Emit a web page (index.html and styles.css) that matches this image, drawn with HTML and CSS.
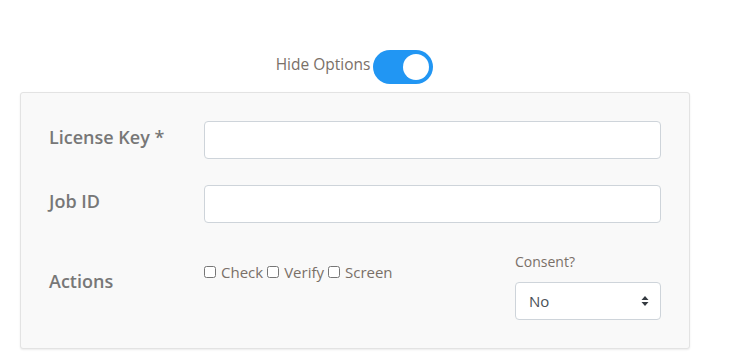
FILE: index.html
```html
<html>
  <head>
    <meta charset="utf-8" />
    <title>Options</title>
    <link rel="stylesheet" href="styles.css">
  </head>
  <body>
    <div class="wrap">
      <div class="toggle-row">
        <span class="toggle-label">Hide Options</span>
        <label class="switch">
          <input type="checkbox" checked>
          <span class="slider"></span>
        </label>
      </div>

      <div class="card">
        <div class="row">
          <div class="label">License Key *</div>
          <input class="field" type="text">
        </div>
        <div class="row">
          <div class="label">Job ID</div>
          <input class="field" type="text">
        </div>
        <div class="row actions">
          <div class="label">Actions</div>
          <div class="checks">
            <label><input type="checkbox"> Check</label>
            <label><input type="checkbox"> Verify</label>
            <label><input type="checkbox"> Screen</label>
          </div>
          <div class="consent">
            <div class="consent-label">Consent?</div>
            <div class="select-box">
              <select>
                <option>No</option>
                <option>Yes</option>
              </select>
              <svg class="arrows" width="8" height="12" viewBox="0 0 8 12">
                <path d="M4 1 L7.5 5 L0.5 5 Z M4 11 L0.5 7 L7.5 7 Z" fill="#343a40"/>
              </svg>
            </div>
          </div>
        </div>
      </div>
    </div>
  </body>
</html>
```

FILE: styles.css
```css
body {
    margin: 0;
    font-family: "Open Sans", "Liberation Sans", sans-serif;
    color: #6f6f6f;
    background: #fff;
}
.wrap {
    width: 670px;
    margin-left: 20px;
}
.toggle-row {
    display: flex;
    justify-content: center;
    align-items: center;
    gap: 3px;
    margin-top: 50px;
    padding-right: 1px;
}
.toggle-label {
    font-size: 15.5px;
    color: #7a7068;
    margin-bottom: 7px;
}
.switch {
    position: relative;
    display: inline-block;
    width: 60px;
    height: 34px;
}
.switch input {
    opacity: 0;
    width: 0;
    height: 0;
}
.slider {
    position: absolute;
    inset: 0;
    background: #2196f3;
    border-radius: 34px;
}
.slider::before {
    content: "";
    position: absolute;
    width: 26px;
    height: 26px;
    right: 4px;
    top: 4px;
    background: #fff;
    border-radius: 50%;
}
.card {
    margin-top: 8px;
    background: #f9f9f9;
    border: 1px solid #e3e3e3;
    border-radius: 3px;
    box-shadow: 0 1px 2px rgba(0, 0, 0, 0.08);
    padding: 28px;
    display: flex;
    flex-direction: column;
    gap: 26px;
}
.row {
    display: flex;
    align-items: center;
}
.label {
    width: 155px;
    flex: none;
    font-size: 18px;
    font-weight: 600;
    color: #777;
    margin-bottom: 7px;
}
.field {
    flex: 1;
    height: 38px;
    box-sizing: border-box;
    border: 1px solid #ced4da;
    border-radius: 4px;
    background: #fff;
    font-size: 15px;
    padding: 6px 12px;
}
.actions {
    align-items: flex-start;
}
.actions .label {
    margin: 20px 0 0;
}
.checks {
    flex: 1;
    display: flex;
    gap: 4px;
    font-size: 15px;
    color: #7a7068;
    padding-top: 13px;
}
.checks label {
    display: flex;
    align-items: center;
    gap: 5px;
}
.checks input {
    margin: 0;
    width: 12px;
    height: 12px;
}
.consent {
    width: 146px;
}
.consent-label {
    font-size: 14px;
    color: #7a7068;
    margin-top: 3px;
    margin-bottom: 11px;
}
.select-box {
    position: relative;
}
.select-box select {
    appearance: none;
    width: 100%;
    height: 38px;
    box-sizing: border-box;
    border: 1px solid #ced4da;
    border-radius: 4px;
    background: #fff;
    font-family: "Open Sans", "Liberation Sans", sans-serif;
    font-size: 15px;
    color: #495057;
    padding: 0 13px;
}
.arrows {
    position: absolute;
    right: 12px;
    top: 13px;
    pointer-events: none;
}
```
